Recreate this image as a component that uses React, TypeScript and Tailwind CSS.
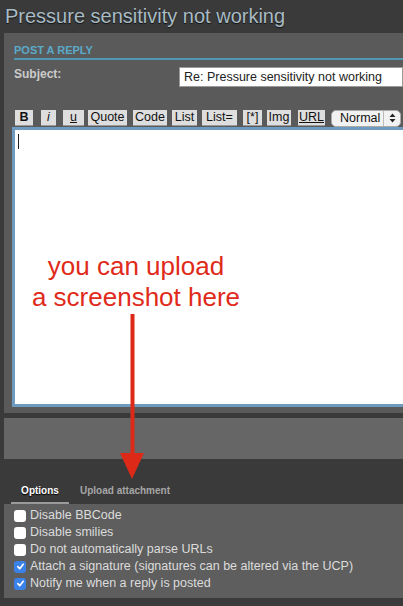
import React from "react";

function Btn({ children, w, className = "" }: { children: React.ReactNode; w: number; className?: string }) {
  return (
    <div
      className={`shrink-0 h-[16px] flex items-center justify-center bg-[#dedede] border-b border-[#9a9a9a] text-[12.5px] leading-none text-[#111] ${className}`}
      style={{ width: w }}
    >
      {children}
    </div>
  );
}

function Check({ checked, label }: { checked?: boolean; label: string }) {
  return (
    <div className="flex items-center h-[17px] gap-[4px]">
      {checked ? (
        <div className="shrink-0 w-[12px] h-[12px] rounded-[3px] bg-[#3b82e8] flex items-center justify-center">
          <svg width="9" height="9" viewBox="0 0 10 10">
            <path d="M2 5.2 L4.2 7.5 L8 2.5" stroke="white" strokeWidth="1.8" fill="none" strokeLinecap="round" strokeLinejoin="round" />
          </svg>
        </div>
      ) : (
        <div className="shrink-0 w-[12px] h-[12px] rounded-[3px] bg-white" />
      )}
      <span className="text-[12.5px] text-[#dcdcdc] leading-none">{label}</span>
    </div>
  );
}

export default function App() {
  return (
    <div
      className="relative w-[403px] h-[606px] overflow-hidden bg-[#3a3a3a]"
      style={{ fontFamily: '"Liberation Sans", Arial, sans-serif' }}
    >
      <div className="h-[33px] pl-[5px] pt-[4px] text-[20px] leading-[24px] text-[#a9bcc5] [text-shadow:0_1px_1px_#111] whitespace-nowrap">
        Pressure sensitivity not working
      </div>

      <div className="ml-[4px] bg-[#5a5a5a] pb-[6px]">
        <div className="pl-[10px] pt-[11px]">
          <div className="text-[11px] font-bold leading-[12px] text-[#5aaac8]">POST A REPLY</div>
          <div className="mt-[2px] h-[2px] bg-[#4f98b2]" />
        </div>
        <div className="flex items-center pl-[10px] mt-[7px] h-[20px]">
          <div className="w-[165px] shrink-0 text-[12px] font-bold text-[#cccccc] leading-none -mt-[6px]">Subject:</div>
          <div className="flex-1 h-[20px] bg-white border border-[#9a9a9a] flex items-center pl-[4px] text-[12.5px] text-[#222] whitespace-nowrap">
            Re: Pressure sensitivity not working
          </div>
        </div>
        <div className="flex items-center pl-[11px] mt-[23px] h-[16px] whitespace-nowrap">
          <Btn w={18} className="font-bold">B</Btn>
          <Btn w={15} className="italic ml-[8px]">i</Btn>
          <Btn w={21} className="underline ml-[7px]">u</Btn>
          <Btn w={39} className="ml-[4px]">Quote</Btn>
          <Btn w={34} className="ml-[6px]">Code</Btn>
          <Btn w={25} className="ml-[5px]">List</Btn>
          <Btn w={35} className="ml-[5px]">List=</Btn>
          <Btn w={19} className="ml-[6px]">[*]</Btn>
          <Btn w={24} className="ml-[5px]">Img</Btn>
          <Btn w={27} className="underline ml-[7px]">URL</Btn>
          <div className="ml-[6px] h-[17px] w-[70px] shrink-0 rounded-[5px] bg-[#f2f2f2] border border-[#aaa] flex items-center pl-[8px] text-[12.5px] text-[#111]">
            <span className="w-[43px]">Normal</span>
            <span className="h-full border-l border-[#bbb] pl-[5px] flex flex-col justify-center items-center leading-none">
              <svg width="7" height="10" viewBox="0 0 7 10">
                <path d="M0.5 4 L3.5 0.5 L6.5 4 Z M0.5 6 L3.5 9.5 L6.5 6 Z" fill="#222" />
              </svg>
            </span>
          </div>
        </div>
        <div className="ml-[8px] mt-[1px] h-[280px] border-[3px] border-r-0 border-[#6f9abf] bg-white">
          <div className="ml-[3px] mt-[4px] w-px h-[15px] bg-[#222]" />
        </div>
      </div>

      <div className="ml-[4px] mt-[5px] h-[41px] bg-[#666666]" />

      <div className="flex items-end h-[45px] pl-[11px] text-[10px] font-bold leading-none">
        <div className="w-[58px] pb-[6px] border-b-[2px] border-[#9a9a9a] flex justify-center text-white [text-shadow:0_1px_1px_#000]">
          Options
        </div>
        <div className="pl-[11px] pb-[8px] text-[#a6a6a6]">Upload attachment</div>
      </div>

      <div className="ml-[4px] h-[94px] bg-[#5e5e5e] pl-[10px] pt-[3px] whitespace-nowrap">
        <Check label="Disable BBCode" />
        <Check label="Disable smilies" />
        <Check label="Do not automatically parse URLs" />
        <Check checked label="Attach a signature (signatures can be altered via the UCP)" />
        <Check checked label="Notify me when a reply is posted" />
      </div>

      <div className="absolute left-[0px] top-[251px] w-[272px] text-center text-[26px] leading-[31px] text-[#e02a1a]">
        you can upload
        <br />
        a screenshot here
      </div>
      <svg className="absolute left-[118px] top-[314px]" width="30" height="166" viewBox="0 0 30 166">
        <rect x="12.5" y="0" width="4" height="145" fill="#dd2a18" />
        <path d="M2 139 L26 139 L14 165 Z" fill="#dd2a18" />
      </svg>
    </div>
  );
}
